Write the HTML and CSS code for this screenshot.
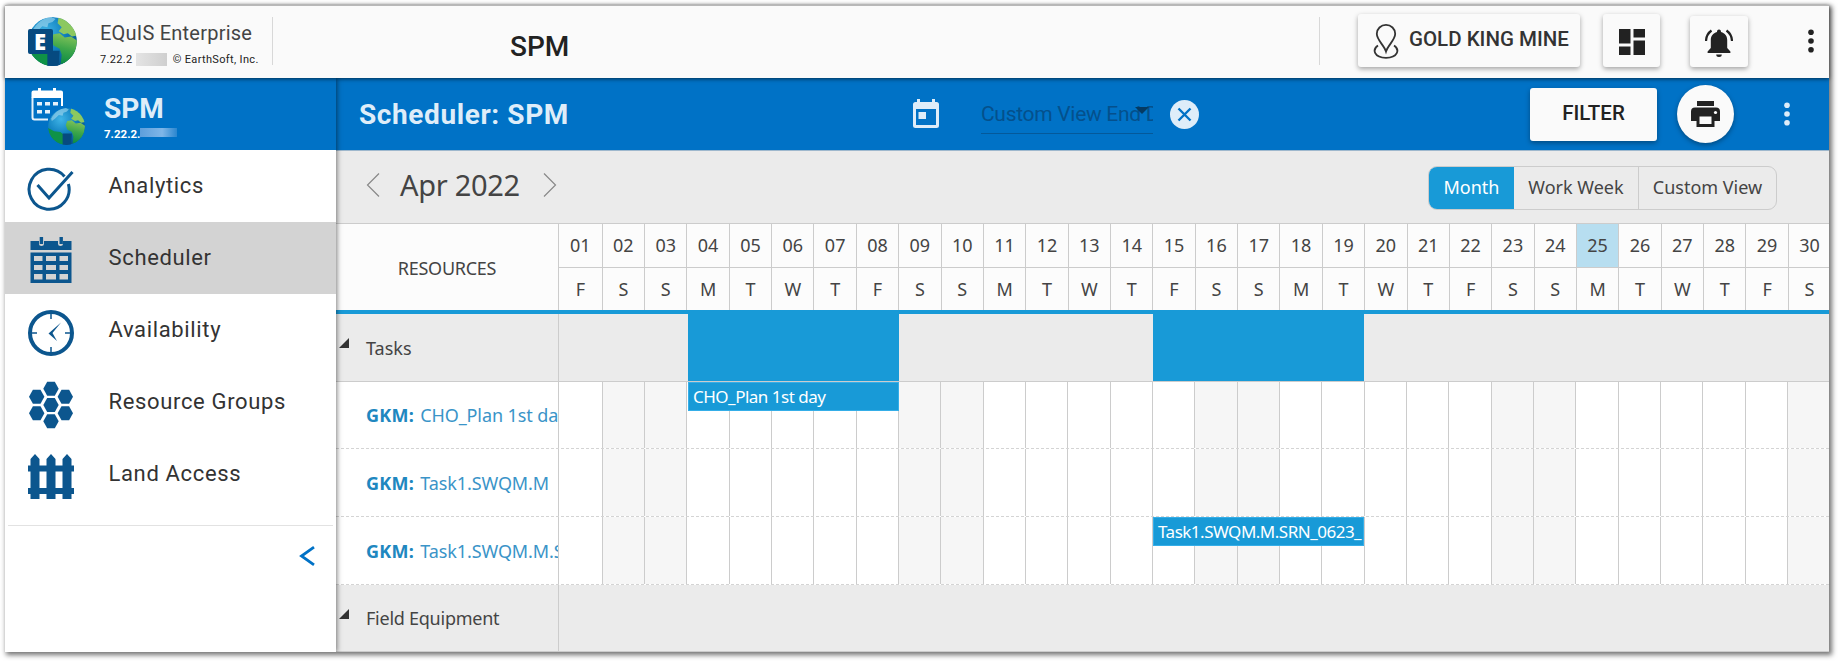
FILE: index.html
```html
<!DOCTYPE html>
<html lang="en">
<head>
<meta charset="utf-8">
<title>EQuIS Enterprise - SPM Scheduler</title>
<link rel="stylesheet" href="styles.css">
</head>
<body>
<svg class="defs" width="0" height="0" aria-hidden="true">
  <defs>
    <radialGradient id="sea" cx=".35" cy=".3" r=".8"><stop offset="0" stop-color="#3fb4e6"/><stop offset=".5" stop-color="#1181c0"/><stop offset="1" stop-color="#064a80"/></radialGradient>
    <linearGradient id="land" x1=".6" y1="0" x2=".4" y2="1"><stop offset="0" stop-color="#86c45a"/><stop offset=".5" stop-color="#3da64a"/><stop offset="1" stop-color="#0b8a45"/></linearGradient>
    <clipPath id="disc"><circle cx="24" cy="24" r="24"/></clipPath>
    <symbol id="globe" viewBox="0 0 48 48">
      <g clip-path="url(#disc)">
        <circle cx="24" cy="24" r="24" fill="url(#sea)"/>
        <path d="M4 14C9 5 15 1 23 0l4 2-3 3-4 1-1 4-5-1-5 5-4 3z" fill="#a5d8ee" opacity=".6"/>
        <path d="M30 0c10 1 18 10 18 18l-5 1-4-3-4 1-5-3 3-4-4-4z" fill="#8cc860"/>
        <path d="M25 17l6-1 5 4 6-1 6 4c0 10-4 17-12 22l-4 1 1-9-2-6-6-3-2-6z" fill="url(#land)"/>
        <path d="M0 26l8 4 8 1 6 5-2 12C9 46 1 38 0 26z" fill="#0f9247"/>
        <path d="M19 33h12l-1 15H19z" fill="#064a80"/>
      </g>
    </symbol>
  </defs>
</svg>
<div class="window">
  <header class="topbar">
    <div class="brand">
      <svg class="brand-logo" viewBox="0 0 49 49"><use href="#globe" width="49" height="49"/><rect y="12" width="25" height="25" rx="2" fill="#064a80"/></svg>
      <span class="brand-letter">E</span>
      <div class="brand-text">
        <div class="brand-name">EQuIS Enterprise</div>
        <div class="brand-version"><span>7.22.2</span><i class="smudge"></i><span class="copy">© EarthSoft, Inc.</span></div>
      </div>
    </div>
    <div class="page-title">SPM</div>
    <div class="top-actions">
      <button class="btn facility">
        <svg width="26" height="35" viewBox="0 0 26 35" fill="none" stroke="#333" stroke-width="1.8"><path d="M13 27.500C11 21 3.800 16 3.800 9.800a9.200 8.900 0 0 1 18.400 0C22.200 16 15 21 13 27.500z"/><path d="M5 21.500c-6 4-4 12.300 8 12.300s14-8.300 8-12.300"/></svg>
        <span>GOLD KING MINE</span>
      </button>
      <button class="btn square dash">
        <svg width="26" height="26" viewBox="0 0 26 26" fill="#222"><path d="M0 0h11.500v14.500H0zM14.500 0H26v8.500H14.500zM0 17.500h11.500V26H0zM14.500 11.500H26V26H14.500z"/></svg>
      </button>
      <button class="btn square bell">
        <svg width="28" height="28" viewBox="0 0 28 28" fill="#222"><path d="M14 .500c1.500 0 2 1 2 2.400 4 1 6.200 4.200 6.200 8.100v8l3.200 3.500V24H2.600v-1.500L5.800 19v-8c0-3.900 2.200-7.100 6.200-8.100C12 1.500 12.500.500 14 .500zM11.200 25.500h5.600a2.800 2.500 0 0 1-5.600 0z"/><path d="M1 12C1.200 7.500 3 4 6.500 1.500M27 12c-.2-4.500-2-8-5.500-10.500" fill="none" stroke="#222" stroke-width="2.200"/></svg>
      </button>
      <svg class="dots" width="6" height="24" viewBox="0 0 6 24" fill="#222"><circle cx="3" cy="3.200" r="2.800"/><circle cx="3" cy="12" r="2.800"/><circle cx="3" cy="20.800" r="2.800"/></svg>
    </div>
  </header>
  <div class="main">
    <aside class="sidebar">
      <div class="app-head">
        <svg class="app-icon" width="55" height="60" viewBox="0 0 55 60"><path d="M2.500 10.500v20a2 2 0 0 0 2 2H18" fill="none" stroke="#e6f1fa" stroke-width="2"/><path d="M1.500 11V5.500a2 2 0 0 1 2-2H8V1h3v2.500h12V1h3v2.500h5a2 2 0 0 1 2 2V19h-2v-8z" fill="#fff"/><path d="M7 15h5v3.500H7zM15 15h5v3.500h-5zM23 15h5v3.500h-5zM7 23h5v3.500H7zM15 23h5v3.500h-5z" fill="#e6f1fa"/><use href="#globe" x="18" y="20" width="37" height="39"/></svg>
        <div><div class="app-name">SPM</div><div class="app-version">7.22.2.<i class="smudge blue"></i></div></div>
      </div>
      <nav class="menu">
        <a class="item"><svg viewBox="0 0 48 48" fill="none" stroke="#0c568e" stroke-width="3"><path d="M37.500 11.500A20 20 0 1 0 41.400 19"/><path d="M10.500 20L22 33 45.500 7"/></svg><span>Analytics</span></a>
        <a class="item active"><svg viewBox="0 0 48 48" fill="#0c568e"><path d="M3.500 4H12v3a2.500 2 0 0 0 5 0V4h14v3a2.500 2 0 0 0 5 0V4h8.500v9h-41z"/><path d="M12.700 0h3.400v7h-3.400zM32.500 0h3.400v7h-3.400z"/><path fill-rule="evenodd" d="M3.500 15.500h41v30.500h-41zM7 19v5h8.500v-5zM19 19v5h10v-5zM32.500 19v5H41v-5zM7 28v5h8.500v-5zM19 28v5h10v-5zM32.500 28v5H41v-5zM7 37v5.500h8.500V37zM19 37v5.500h10V37zM32.500 37v5.500H41V37z"/></svg><span>Scheduler</span></a>
        <a class="item"><svg viewBox="0 0 48 48" fill="none" stroke="#0c568e"><circle cx="24" cy="24" r="21" stroke-width="4"/><path d="M24 5v5M24 38v5M5 24h5M38 24h5" stroke-width="1.500"/><path d="M21.500 24.500L34 13.500 25.500 24 30 32z" fill="#0c568e" stroke="none"/></svg><span>Availability</span></a>
        <a class="item"><svg viewBox="0 0 48 48" fill="#0c568e"><path id="hex" d="M16.300 24l3.900-7h7.600l3.900 7-3.900 7h-7.600z"/><use href="#hex" y="-16.200"/><use href="#hex" y="16.200"/><use href="#hex" x="-14.300" y="-8.200"/><use href="#hex" x="-14.300" y="8.200"/><use href="#hex" x="14.300" y="-8.200"/><use href="#hex" x="14.300" y="8.200"/></svg><span>Resource Groups</span></a>
        <a class="item"><svg viewBox="0 0 48 48" fill="#0c568e"><path d="M3.500 46V6L8 1l4.500 5v40zM19.500 46V6L24 1l4.500 5v40zM35.500 46V6L40 1l4.500 5v40z"/><path d="M1 12.500h46v6H1zM1 35h46v6H1z"/></svg><span>Land Access</span></a>
      </nav>
      <div class="collapse"><svg width="16" height="20" viewBox="0 0 16 20" fill="none" stroke="#0072c6" stroke-width="2.800"><path d="M15 1.200L2.500 10 15 18.800"/></svg></div>
    </aside>
    <section class="content">
      <div class="action-bar">
        <h1>Scheduler: SPM</h1>
        <svg class="cal" width="26" height="29" viewBox="0 0 26 29"><path fill-rule="evenodd" fill="#deedf9" d="M4 0h3v3h12V0h3v3h1.500A2.500 2.500 0 0 1 26 5.500v21a2.500 2.500 0 0 1-2.500 2.500h-21A2.500 2.500 0 0 1 0 26.500v-21A2.500 2.500 0 0 1 2.500 3H4zM3 10v16h20V10zM5.500 13h7.500v7H5.500z"/></svg>
        <div class="date-field"><span>Custom View End Date</span><i class="caret"></i></div>
        <svg class="clear" width="29" height="29" viewBox="0 0 29 29"><circle cx="14.500" cy="14.500" r="14.500" fill="#deedf9"/><path d="M8.500 8.500l12 12m0-12l-12 12" stroke="#0072c6" stroke-width="2.400"/></svg>
        <button class="filter">FILTER</button>
        <button class="print"><svg width="29" height="26" viewBox="0 0 29 26"><path fill="#222" fill-rule="evenodd" d="M6 0h17v5H6zM4 6.500h21a4 4 0 0 1 4 4V20h-5.500v6h-18v-6H0v-9.500a4 4 0 0 1 4-4zM8.500 15.500v7.500h12v-7.500z"/><circle cx="24.500" cy="11.500" r="1.600" fill="#fff"/></svg></button>
        <svg class="dots light" width="6" height="24" viewBox="0 0 6 24" fill="#deedf9"><circle cx="3" cy="3.200" r="2.800"/><circle cx="3" cy="12" r="2.800"/><circle cx="3" cy="20.800" r="2.800"/></svg>
      </div>
      <div class="nav-bar">
        <svg class="arrow" width="14" height="24" viewBox="0 0 14 24"><path d="M13 .500L1.500 12 13 23.500"/></svg>
        <span class="month-label">Apr 2022</span>
        <svg class="arrow" width="14" height="24" viewBox="0 0 14 24"><path d="M1 .500L12.500 12 1 23.500"/></svg>
        <div class="views"><span class="view on">Month</span><span class="view week">Work Week</span><span class="view custom">Custom View</span></div>
      </div>
      <div class="grid-head">
        <div class="res-head">RESOURCES</div>
        <div class="days" id="days"></div>
      </div>
      <div class="group">
        <div class="res"><i class="tri"></i><span>Tasks</span></div>
        <div class="track"><b class="summary from-04"></b><b class="summary from-15"></b></div>
      </div>
      <div class="row first">
        <div class="res link"><b>GKM:</b><span>CHO_Plan 1st day</span></div>
        <div class="track cells"><div class="event from-04"><span>CHO_Plan 1st day</span></div></div>
      </div>
      <div class="row">
        <div class="res link"><b>GKM:</b><span>Task1.SWQM.M</span></div>
        <div class="track cells"></div>
      </div>
      <div class="row">
        <div class="res link"><b>GKM:</b><span>Task1.SWQM.M.SRN</span></div>
        <div class="track cells"><div class="event from-15"><span>Task1.SWQM.M.SRN_0623_</span></div></div>
      </div>
      <div class="group last">
        <div class="res"><i class="tri"></i><span class="fe">Field Equipment</span></div>
        <div class="track"></div>
      </div>
    </section>
  </div>
</div>
<script src="calendar.js"></script>
</body>
</html>
```
FILE: calendar.js
```js
// April 2022 starts on a Friday; day 25 is today.
const letters = ['S', 'M', 'T', 'W', 'T', 'F', 'S'];
const head = document.getElementById('days');
const tracks = document.querySelectorAll('.cells');
for (let d = 1; d <= 30; d++) {
  const dow = (d + 4) % 7;
  const col = document.createElement('div');
  col.className = 'day' + (d === 25 ? ' today' : '');
  col.innerHTML = `<span>${String(d).padStart(2, '0')}</span><span>${letters[dow]}</span>`;
  head.append(col);
  tracks.forEach(t => {
    const c = document.createElement('i');
    c.className = 'cell' + (dow === 0 || dow === 6 ? ' weekend' : '');
    t.append(c);
  });
}
```
FILE: styles.css
```css
* { box-sizing: border-box; }
body { margin: 0; padding: 5px 0 0 5px; height: 661px; background: #fff; font-family: Roboto, sans-serif; color: #222; }
button { font: inherit; border: 0; padding: 0; }
.defs { position: absolute; }
.window { width: 1824px; height: 647px; box-shadow: 2px 2px 5px 1px rgba(0,0,0,.55); display: flex; flex-direction: column; background: #fff; }

.topbar { height: 73px; flex: none; background: #fafafa; border-top: 1px solid #b8b8b8; display: flex; position: relative; z-index: 3; box-shadow: 0 1px 4px rgba(0,0,0,.6); }
.brand { width: 268px; height: 48px; margin-top: 11px; padding-left: 23px; border-right: 1px solid #d8d8d8; display: flex; position: relative; }
.brand-logo { width: 49px; height: 49px; }
.brand-letter { position: absolute; left: 29px; top: 12px; font: 800 22px/25px "Open Sans", sans-serif; color: #fff; }
.brand-text { padding: 4px 0 0 23px; white-space: nowrap; }
.brand-name { font-size: 20px; line-height: 24px; color: #444; letter-spacing: .22px; }
.brand-version { font-size: 11px; line-height: 14px; margin-top: 8px; display: flex; color: #222; letter-spacing: .35px; }
.smudge { display: inline-block; width: 31px; height: 13px; margin-left: 3px; background: linear-gradient(90deg,#e4e4e4,#cfcfcf); }
.brand-version .copy { margin-left: 6px; }
.page-title { margin-left: 237px; font-size: 28px; font-weight: 500; line-height: 32px; margin-top: 25px; }
.top-actions { margin-left: auto; display: flex; align-items: flex-start; padding-top: 11px; }
.top-actions::before { content: ""; width: 1px; height: 48px; background: #d8d8d8; margin-right: 38px; }
.btn { background: #fafafa; border-radius: 3px; box-shadow: 0 2px 5px rgba(0,0,0,.35); display: flex; align-items: center; margin-top: -3px; height: 53px; color: #333; }
.facility { width: 222px; padding-left: 15px; font-size: 20.500px; font-weight: 500; }
.facility svg { margin-top: 2px; }
.facility span { margin: -3px 0 0 10px; white-space: nowrap; }
.square { justify-content: center; width: 57px; margin-left: 23px; }
.square svg { margin-top: 3px; }
.bell { width: 58px; margin-left: 30px; margin-top: -1px; height: 51px; }
.bell svg { margin-top: 2px; }
.top-actions .dots { margin: 12px 15px 0 60px; }

.main { flex: 1; display: flex; min-height: 0; }
.sidebar { width: 331px; background: #fff; position: relative; z-index: 2; box-shadow: 1px 0 5px rgba(0,0,0,.5); clip-path: inset(0 -18px 0 0); }
.app-head { height: 72px; background: #0072c6; display: flex; padding: 9px 0 0 25px; color: #deedf9; }
.app-head > div { margin-left: 19px; }
.app-name { font-size: 28px; font-weight: 700; line-height: 32px; padding-top: 6px; }
.app-version { font-size: 11.500px; font-weight: 700; line-height: 14px; margin-top: 2px; color: #fff; display: flex; }
.smudge.blue { background: linear-gradient(90deg,#5d9fdc,#7fb6e8 60%,#2a86cf); height: 9px; margin: 1px 0 0; width: 37px; }
.item { height: 72px; display: flex; align-items: center; padding-left: 22px; font-size: 22px; letter-spacing: .65px; color: #333; }
.item svg { width: 48px; height: 48px; margin-top: 6px; }
.item span { margin: -2px 0 0 33.500px; white-space: nowrap; }
.active { background: #d3d3d3; }
.collapse { margin: 15px 3px 0; border-top: 1px solid #e2e2e2; display: flex; justify-content: flex-end; padding: 20px 18px 0; }

.content { flex: 1; min-width: 0; overflow: hidden; background: #ebebeb; display: flex; flex-direction: column; font-family: "Noto Sans", sans-serif; }
.action-bar { height: 73px; flex: none; background: #0072c6; display: flex; align-items: center; padding-left: 23px; font-family: Roboto, sans-serif; border-bottom: 1px solid #9fb8cd; }
h1 { margin: 1px 0 0; font-size: 28px; font-weight: 700; letter-spacing: .6px; color: #deedf9; width: 554px; white-space: nowrap; }
.cal { margin-top: -2px; }
.date-field { margin-left: 42px; width: 172px; height: 40px; overflow: hidden; white-space: nowrap; border-bottom: 1px solid #04599a; font-size: 21px; letter-spacing: -.3px; line-height: 40px; color: #04508c; position: relative; }
.caret { position: absolute; right: 4px; top: 13px; border: 7px solid transparent; border-top-color: #053a63; border-bottom: 0; }
.clear { margin-left: 17px; margin-top: 1px; }
.filter { width: 127px; height: 53px; margin-left: 331px; background: #fafafa; border-radius: 3px; box-shadow: 0 2px 5px rgba(0,0,0,.35); font-size: 20.500px; font-weight: 500; color: #222; padding-bottom: 2px; }
.print { width: 57px; height: 58px; border-radius: 50%; background: #fafafa; margin-left: 20px; display: flex; align-items: center; justify-content: center; box-shadow: 0 2px 5px rgba(0,0,0,.35); }
.light { margin-left: 50px; }

.nav-bar { height: 72px; flex: none; display: flex; align-items: center; padding-left: 30px; }
.arrow { fill: none; stroke: #888; stroke-width: 1.200; margin-top: -5px; }
.month-label { width: 121px; margin: -6px 22px 0 20px; padding-right: 1px; font-size: 29px; letter-spacing: -.3px; color: #444; white-space: nowrap; }
.views { margin-left: auto; margin-right: 52px; margin-top: 1px; height: 44px; width: 349px; border: 1px solid #ccc; border-radius: 9px; display: flex; overflow: hidden; font-size: 18px; color: #444; }
.view { display: flex; align-items: center; justify-content: center; white-space: nowrap; width: 85px; padding-bottom: 1px; }
.on { background: #189ad7; color: #fff; }
.week { width: 125px; border-right: 1px solid #ccc; }
.custom { flex: 1; }

.grid-head { height: 91px; flex: none; background: #fcfcfc; border-top: 1px solid #ccc; border-bottom: 4px solid #189ad7; display: flex; font-size: 18px; color: #444; }
.res-head { width: 223px; flex: none; display: flex; align-items: center; justify-content: center; border-right: 1px solid #ccc; letter-spacing: -.25px; padding-top: 2px; }
.days { display: flex; }
.day { width: 42.370px; flex: none; border-right: 1px solid #ccc; display: flex; flex-direction: column; }
.day:first-child { width: 43.700px; }
.day span { height: 43px; display: flex; align-items: center; justify-content: center; }
.day span:first-child { border-bottom: 1px solid #ccc; height: 44px; }
.today span:first-child { background: #b7def0; }

.group, .row { height: 68px; flex: none; display: flex; font-size: 18px; color: #444; }
.group { border-bottom: 1px solid #ccc; }
.group.last { height: 67px; }
.row { background: #fff; border-bottom: 1px dashed #d4d4d4; }
.row.first { height: 67px; }
.res { width: 223px; flex: none; border-right: 1px solid #ccc; padding-left: 30px; display: flex; align-items: center; overflow: hidden; white-space: nowrap; position: relative; }
.fe { letter-spacing: -.25px; }
.link { color: #3a94c8; letter-spacing: -.1px; }
.link b { color: #2087bf; margin-right: 6px; letter-spacing: .3px; }
.tri { position: absolute; left: 3px; top: 24px; border-left: 10px solid transparent; border-bottom: 10px solid #333; }
.track { flex: 1; display: flex; position: relative; }
.cell { width: 42.330px; flex: none; border-right: 1px solid #ccc; }
.event + .cell, .cell:first-child { width: 43.700px; }
.weekend { background: #f6f6f6; }
.summary { position: absolute; top: -4px; height: 71px; width: 211px; background: #189ad7; }
.event { position: absolute; top: 0; height: 29px; width: 211px; background: #189ad7; border: 1px solid #35aee8; color: #fff; padding-left: 4px; line-height: 27px; overflow: hidden; white-space: nowrap; font-size: 17px; letter-spacing: -.5px; }
.from-04 { left: 129px; }
.from-15 { left: 594px; }
```
